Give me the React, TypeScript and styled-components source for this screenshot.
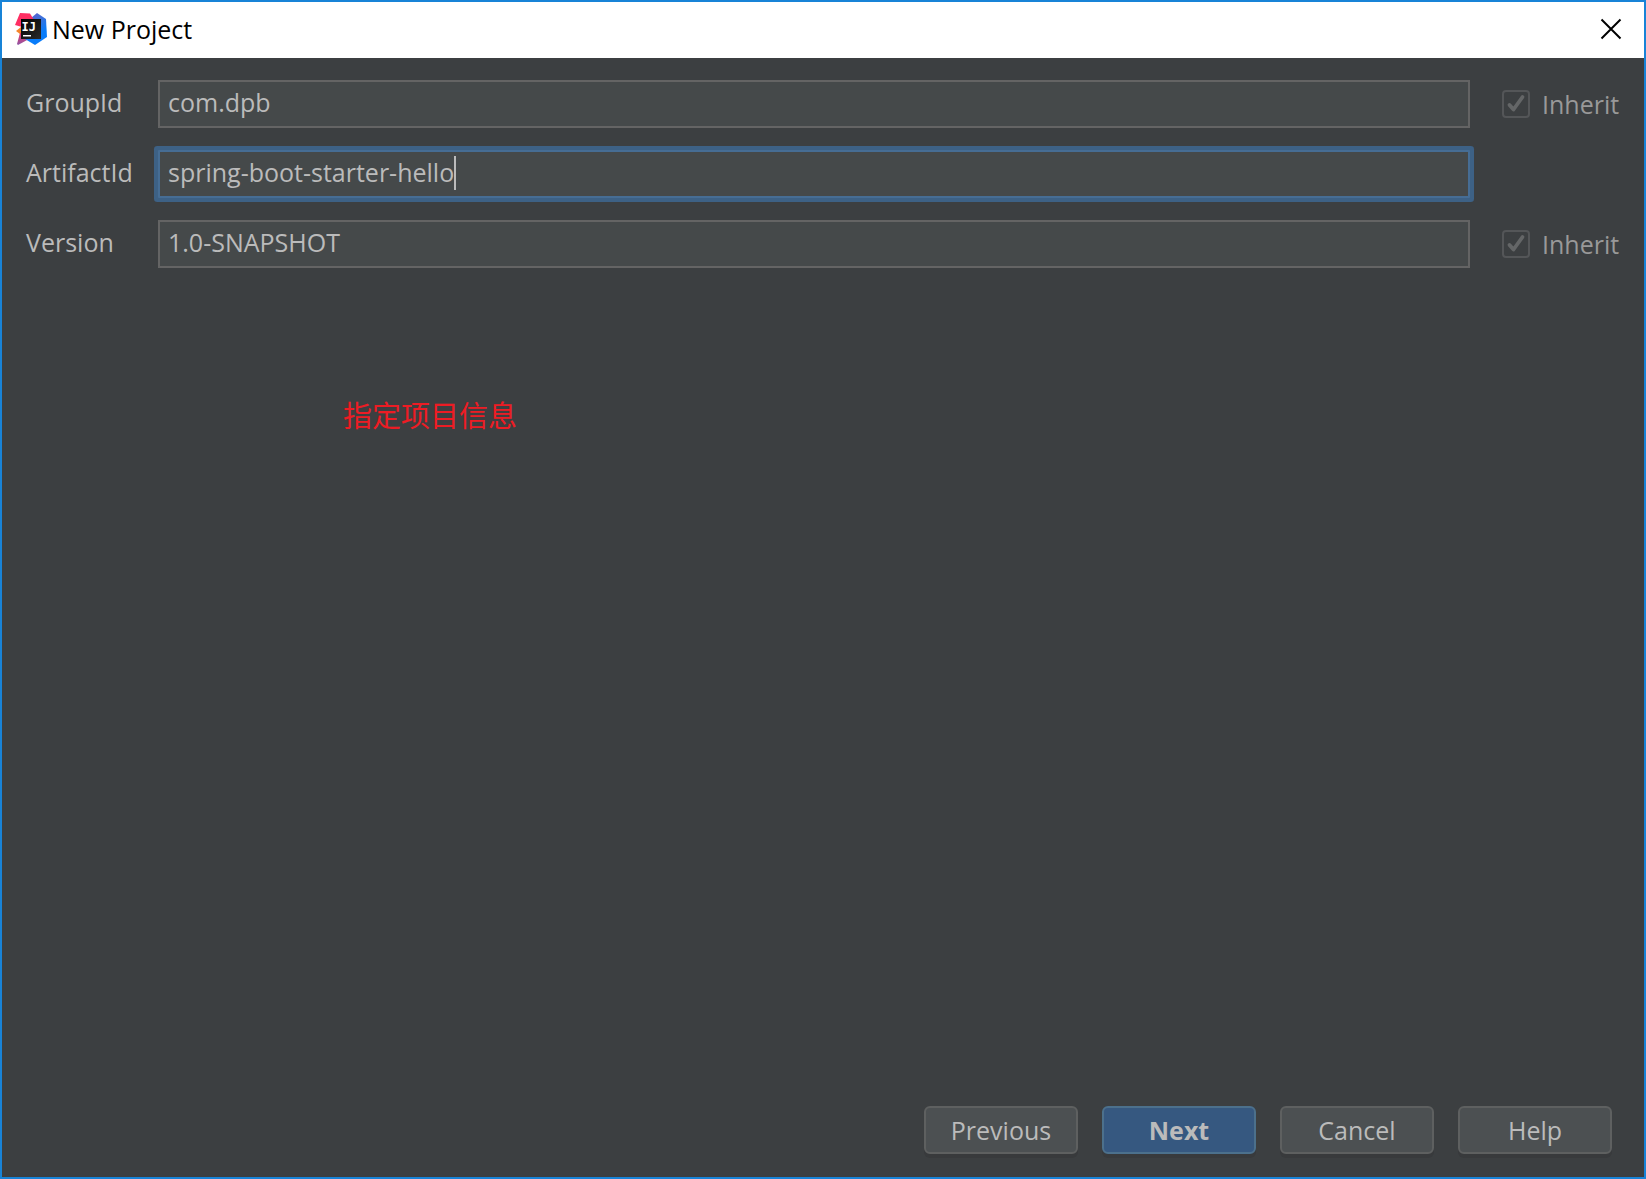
import React, { useLayoutEffect, useRef, useState } from "react";
import styled, { createGlobalStyle } from "styled-components";

const uiFont = `"Open Sans", "Noto Sans", "Noto Sans CJK SC", sans-serif`;

const GlobalStyle = createGlobalStyle`
  *, *::before, *::after { box-sizing: border-box; }
  body { margin: 0; background: #3c3f41; }
`;

const DialogWindow = styled.div`
  display: flex;
  flex-direction: column;
  min-height: 100vh;
  border: 2px solid #1883d7;
  background: #3c3f41;
  color: #bbbbbb;
  font-family: ${uiFont};
  font-size: 25px;
  line-height: 34px;
`;

const TitleBar = styled.header`
  display: flex;
  align-items: center;
  gap: 5px;
  height: 56px;
  padding: 0 21px 2px 13px;
  background: #ffffff;
  color: #000000;
`;

const Title = styled.h1`
  flex: 1;
  margin: 0;
  font-size: 25px;
  font-weight: 400;
  line-height: 34px;
`;

const CloseButton = styled.button`
  display: flex;
  padding: 0;
  border: 0;
  background: transparent;
  color: #000000;
`;

const Form = styled.form`
  display: flex;
  flex: 1;
  flex-direction: column;
  padding: 22px 26px 23px 24px;
`;

const Fields = styled.div`
  display: flex;
  flex-direction: column;
  gap: 22px;
`;

const FieldRow = styled.div`
  display: grid;
  grid-template-columns: 100px minmax(0, 1fr) 116px;
  column-gap: 32px;
  align-items: center;
`;

const FieldLabel = styled.label`
  padding-bottom: 4px;
  white-space: nowrap;
`;

const InputFrame = styled.div`
  position: relative;
  display: flex;
`;

const TextInput = styled.input<{ $active: boolean }>`
  width: 100%;
  height: 48px;
  padding: 0 8px 4px;
  border: 2px solid ${(p) => (p.$active ? "#466d94" : "#646464")};
  border-radius: ${(p) => (p.$active ? "1px" : "0")};
  outline: none;
  box-shadow: ${(p) => (p.$active ? "0 0 0 4px #3d6185" : "none")};
  background: #45494a;
  color: #bbbbbb;
  caret-color: transparent;
  font: inherit;
`;

const Caret = styled.span`
  position: absolute;
  top: 6px;
  width: 2px;
  height: 34px;
  background: #bbbbbb;
  pointer-events: none;
`;

const InheritLabel = styled.label`
  display: flex;
  align-items: center;
  gap: 12px;
  color: #999999;
`;

const CheckFrame = styled.span`
  display: grid;
  width: 28px;
  height: 28px;
  flex: none;

  & > * {
    grid-area: 1 / 1;
  }
`;

const CheckInput = styled.input`
  width: 28px;
  height: 28px;
  margin: 0;
  border: 2px solid #545658;
  border-radius: 4px;
  background: transparent;
  appearance: none;
`;

const Note = styled.p`
  flex: 1;
  margin: 0;
  padding: 124px 0 0 317px;
  color: #ed1c24;
  font-family: "Noto Sans CJK SC", sans-serif;
  font-size: 29px;
  line-height: 44px;
`;

const Actions = styled.footer`
  display: flex;
  justify-content: flex-end;
  gap: 24px;
  padding-right: 6px;
`;

const ActionButton = styled.button<{ $primary?: boolean }>`
  width: 154px;
  height: 48px;
  padding: 0;
  border: 2px solid ${(p) => (p.$primary ? "#4c708c" : "#5e6060")};
  border-radius: 6px;
  background: ${(p) => (p.$primary ? "#365880" : "#4c5052")};
  box-shadow: 0 4px 0 #383a3c;
  color: #bbbbbb;
  font: inherit;
  font-weight: ${(p) => (p.$primary ? 700 : 400)};
`;

function AppLogo() {
  return (
    <svg width="32" height="32" viewBox="0 0 32 32" aria-hidden="true">
      <defs>
        <linearGradient id="blue" x1="0" y1="0" x2="0.5" y2="1">
          <stop offset="0" stopColor="#6b57c4" />
          <stop offset="0.45" stopColor="#3a72dc" />
          <stop offset="0.8" stopColor="#087cfa" />
        </linearGradient>
        <linearGradient id="violet" x1="0" y1="0" x2="0" y2="1">
          <stop offset="0" stopColor="#fe2e58" />
          <stop offset="1" stopColor="#8b57a8" />
        </linearGradient>
        <linearGradient id="tile" x1="0" y1="0" x2="1" y2="1">
          <stop offset="0" stopColor="#000000" />
          <stop offset="1" stopColor="#2b2b2b" />
        </linearGradient>
      </defs>
      <path d="M1 18 L6 14 L12 22 L5 21 Z" fill="#f58529" />
      <path d="M5 20 L14 18 L14 26 L3 32 L2 31 Z" fill="url(#violet)" />
      <path d="M16 5 L22 0 L31 6 L32 24 L20 32 L10 26 Z" fill="url(#blue)" />
      <path d="M5 0 L15 0.500 L19 7 L14 16 L0 12 Z" fill="#fe2e62" />
      <rect x="6" y="6" width="20" height="20" fill="url(#tile)" />
      <text x="6.500" y="18" fill="#ffffff" fontFamily="DejaVu Sans Mono" fontSize="12" fontWeight="700">IJ</text>
      <rect x="8" y="22" width="8" height="1.500" fill="#ffffff" />
    </svg>
  );
}

function CheckMark() {
  return (
    <svg width="28" height="28" viewBox="0 0 28 28" fill="none" aria-hidden="true">
      <path d="M7.500 15 L11.500 19.500 L20.500 7" stroke="#646667" strokeWidth="3.800" strokeLinecap="round" strokeLinejoin="round" />
    </svg>
  );
}

interface FieldProps {
  id: string;
  label: string;
  initial: string;
  inherit?: boolean;
  active: boolean;
  onActivate: (id: string) => void;
}

function Field({ id, label, initial, inherit, active, onActivate }: FieldProps) {
  const [value, setValue] = useState(initial);
  const [caretX, setCaretX] = useState(0);
  const input = useRef<HTMLInputElement>(null);

  useLayoutEffect(() => {
    const context = document.createElement("canvas").getContext("2d");
    if (!context || !input.current) return;
    const style = getComputedStyle(input.current);
    context.font = `${style.fontSize} ${style.fontFamily}`;
    setCaretX(Math.round(context.measureText(value).width) + 10);
  }, [value]);

  return (
    <FieldRow>
      <FieldLabel htmlFor={id}>{label}</FieldLabel>
      <InputFrame>
        <TextInput
          ref={input}
          id={id}
          type="text"
          spellCheck={false}
          value={value}
          $active={active}
          onFocus={() => onActivate(id)}
          onChange={(event) => setValue(event.target.value)}
        />
        {active && <Caret style={{ left: caretX }} />}
      </InputFrame>
      {inherit && (
        <InheritLabel>
          <CheckFrame>
            <CheckInput type="checkbox" defaultChecked disabled />
            <CheckMark />
          </CheckFrame>
          Inherit
        </InheritLabel>
      )}
    </FieldRow>
  );
}

const fields = [
  { id: "groupId", label: "GroupId", initial: "com.dpb", inherit: true },
  { id: "artifactId", label: "ArtifactId", initial: "spring-boot-starter-hello" },
  { id: "version", label: "Version", initial: "1.0-SNAPSHOT", inherit: true },
];

export default function App() {
  const [activeField, setActiveField] = useState("artifactId");

  return (
    <DialogWindow role="dialog" aria-labelledby="dialog-title">
      <GlobalStyle />
      <TitleBar>
        <AppLogo />
        <Title id="dialog-title">New Project</Title>
        <CloseButton type="button" aria-label="Close">
          <svg width="24" height="24" viewBox="0 0 24 24" fill="none" aria-hidden="true">
            <path d="M2.500 2.500 L21.500 21.500 M21.500 2.500 L2.500 21.500" stroke="currentColor" strokeWidth="2" />
          </svg>
        </CloseButton>
      </TitleBar>
      <Form onSubmit={(event) => event.preventDefault()}>
        <Fields>
          {fields.map((field) => (
            <Field key={field.id} {...field} active={activeField === field.id} onActivate={setActiveField} />
          ))}
        </Fields>
        <Note lang="zh-CN">指定项目信息</Note>
        <Actions>
          <ActionButton type="button">Previous</ActionButton>
          <ActionButton type="submit" $primary>Next</ActionButton>
          <ActionButton type="button">Cancel</ActionButton>
          <ActionButton type="button">Help</ActionButton>
        </Actions>
      </Form>
    </DialogWindow>
  );
}
